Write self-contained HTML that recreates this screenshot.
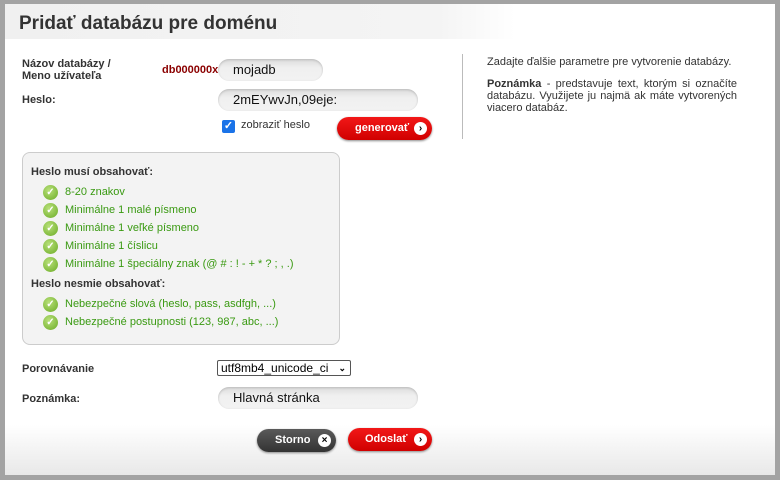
<!DOCTYPE html>
<html><head><meta charset="utf-8"><style>
*{margin:0;padding:0;box-sizing:border-box}
body{width:780px;height:480px;background:#a3a3a3;font-family:"Liberation Sans",Arial,sans-serif;position:relative;overflow:hidden}
#page{position:absolute;left:5px;top:4px;width:770px;height:471px;background:#fff;overflow:hidden}
.foot{position:absolute;left:0;right:0;bottom:0;height:50px;background:linear-gradient(#fff,#e8e8e8)}
.hdr{position:absolute;left:0;top:0;width:510px;height:35px;background:linear-gradient(90deg,#f0f0f0 0%,#f4f4f4 85%,rgba(255,255,255,0) 100%)}
.a{position:absolute}
h1{position:absolute;left:14px;top:9px;font-size:19px;font-weight:bold;color:#333}
.lbl{font-size:11px;font-weight:bold;color:#333;line-height:12px}
.inp{position:absolute;height:22px;border-radius:11px;background:linear-gradient(#dcdcdc,#f0f0f0 40%,#f2f2f2);box-shadow:inset 0 1px 2px #bbb;font-size:13px;color:#111;padding-left:15px;line-height:22px}
.btn{position:absolute;height:23px;border-radius:12px;color:#fff;font-size:11px;font-weight:bold;line-height:22px}
.btn i{position:absolute;right:5px;top:5px;width:13px;height:13px;border-radius:50%;background:#fff;color:#000;font-style:normal;font-size:10px;line-height:13px;text-align:center;font-weight:bold}
.red{background:linear-gradient(#f21818,#d00000);box-shadow:0 1px 2px #888}
.dark{background:linear-gradient(#5a5a5a,#333);box-shadow:0 1px 2px #888}
.box{position:absolute;left:17px;top:148px;width:318px;height:193px;border:1px solid #ccc;border-radius:8px;background:#f3f3f3}
.box .t{position:absolute;left:8px;font-size:11px;font-weight:bold;color:#333}
.box .c{position:absolute;left:20px;font-size:11px;color:#3a9a12;padding-left:22px;line-height:14px}
.box .c:before{content:"✓";position:absolute;left:0;top:0;width:15px;height:15px;border-radius:50%;background:radial-gradient(circle at 40% 35%,#b8e07a,#6aab24);color:#fff;font-size:10px;font-weight:bold;text-align:center;line-height:15px}
.r{position:absolute;left:482px;width:250px;font-size:11px;color:#333;line-height:12px;text-align:justify}
</style></head><body>
<div id="page">
<div class="foot"></div>
<div class="hdr"></div>
<h1>Pridať databázu pre doménu</h1>
<div class="a lbl" style="left:17px;top:54px">Názov databázy /<br>Meno užívateľa</div>
<div class="inp" style="left:213px;top:55px;width:105px">mojadb</div>
<div class="a" style="left:157px;top:60px;font-size:11px;font-weight:bold;color:#8b0000;z-index:2">db000000x</div>
<div class="a lbl" style="left:17px;top:90px">Heslo:</div>
<div class="inp" style="left:213px;top:85px;width:200px">2mEYwvJn,09eje:</div>
<div class="a" style="left:217px;top:116px;width:13px;height:13px;background:#1a73e8;border-radius:2px;color:#fff;font-size:11px;line-height:13px;text-align:center;font-weight:bold">✓</div>
<div class="a" style="left:236px;top:115px;font-size:11px;color:#333">zobraziť heslo</div>
<div class="btn red" style="left:332px;top:113px;width:95px;padding-left:18px">generovať<i>›</i></div>
<div class="a" style="left:457px;top:50px;width:1px;height:85px;background:#bbb"></div>
<div class="r" style="top:52px">Zadajte ďalšie parametre pre vytvorenie databázy.</div>
<div class="r" style="top:74px"><b>Poznámka</b> - predstavuje text, ktorým si označíte databázu. Využijete ju najmä ak máte vytvorených viacero databáz.</div>
<div class="box">
<div class="t" style="top:13px">Heslo musí obsahovať:</div>
<div class="c" style="top:32px">8-20 znakov</div>
<div class="c" style="top:50px">Minimálne 1 malé písmeno</div>
<div class="c" style="top:68px">Minimálne 1 veľké písmeno</div>
<div class="c" style="top:86px">Minimálne 1 číslicu</div>
<div class="c" style="top:104px">Minimálne 1 špeciálny znak (@ # : ! - + * ? ; , .)</div>
<div class="t" style="top:125px">Heslo nesmie obsahovať:</div>
<div class="c" style="top:144px">Nebezpečné slová (heslo, pass, asdfgh, ...)</div>
<div class="c" style="top:162px">Nebezpečné postupnosti (123, 987, abc, ...)</div>
</div>
<div class="a lbl" style="left:17px;top:359px">Porovnávanie</div>
<div class="a" style="left:212px;top:356px;width:134px;height:16px;border:1px solid #555;border-radius:2px;font-size:12px;line-height:14px;padding-left:3px;color:#000">utf8mb4_unicode_ci<span style="position:absolute;right:4px;top:0;font-size:9px;font-weight:bold">&#8964;</span></div>
<div class="a lbl" style="left:17px;top:389px">Poznámka:</div>
<div class="inp" style="left:213px;top:383px;width:200px">Hlavná stránka</div>
<div class="btn dark" style="left:252px;top:425px;width:79px;padding-left:18px">Storno<i>×</i></div>
<div class="btn red" style="left:343px;top:424px;width:84px;padding-left:17px">Odoslať<i>›</i></div>
</div>
</body></html>
